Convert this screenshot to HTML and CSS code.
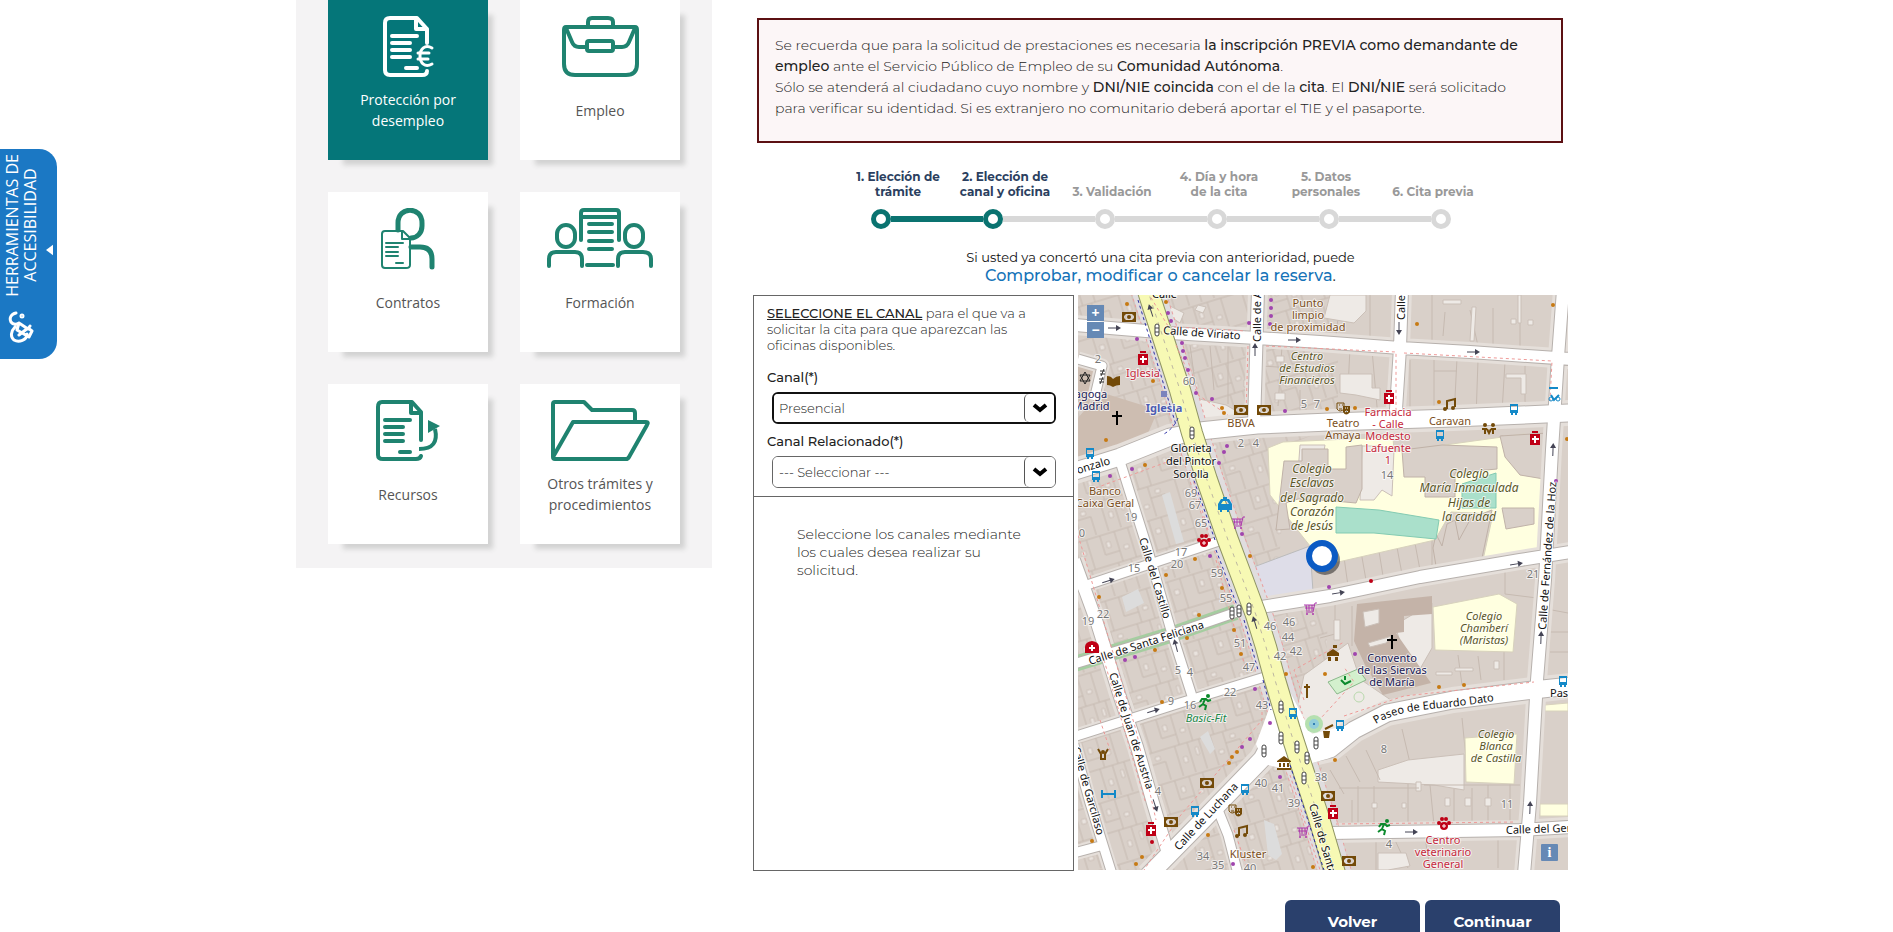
FILE: index.html
```html
<!DOCTYPE html>
<html lang="es">
<head>
<meta charset="utf-8">
<title>Cita previa</title>
<link rel="stylesheet" href="styles.css">
</head>
<body>
<button class="access" type="button">
  <span class="access-main">
    <span class="access-text">HERRAMIENTAS DE<br>ACCESIBILIDAD</span>
    <svg class="access-icon" viewBox="0 0 28 34" aria-hidden="true"><path d="M9 4C4 5 2 9 4 13q3 4 8 1l9 6M21 20l2-3M12 14l-2 7 12 7M8 18c-4 4-5 10-1 13 5 3 13 0 13-6M12 26l9-7 4 3-3 6"/><circle cx="15" cy="7" r="1"/></svg>
  </span>
  <svg class="access-arrow" viewBox="0 0 8 12" aria-hidden="true"><path d="M8 0v12L0 6z"/></svg>
</button>

<div class="page">
  <nav class="topics" aria-label="Trámites">
    <a class="topic topic-active" href="#">
      <svg class="topic-icon" viewBox="0 0 160 62" stroke-width="4"><path d="M99 27V13L89 2H62q-5 0-5 5v47q0 5 5 5h32q5 0 5-4M88 2v11h11M64 20h25M64 27h18M64 34h18M64 41h18M78 52h11"/><path stroke-width="3" d="M104 32c-7-4-12 1-12 8s5 12 12 8M90 37h11M90 43h10"/></svg>
      <span class="topic-label">Protección por desempleo</span>
    </a>
    <a class="topic" href="#">
      <svg class="topic-icon" viewBox="0 0 160 62" stroke-width="4"><path d="M46 11h69q2 0 2 3v34q0 11-11 11H55q-11 0-11-11V14q0-3 2-3zM46 12l6 14q2 5 7 5h8M94 31h8q5 0 7-5l6-14M68 10V6q0-4 4-4h16q5 0 5 4v4"/><rect x="67" y="25" width="26" height="10" rx="2"/></svg>
      <span class="topic-label">Empleo</span>
    </a>
    <a class="topic" href="#">
      <svg class="topic-icon" viewBox="0 0 160 62" stroke-width="5"><path d="M70 22v-7C70-2 94-2 94 15v3c0 7-5 12-11 12M83 39h9q12 0 12 12v8"/><path stroke-width="2" d="M75 23H57q-3 0-3 3v31q0 3 3 3h21q4 0 4-3V30zM74 23v8h8M58 35h17M58 39h12M58 44h12M58 48h12M68 55h7"/></svg>
      <span class="topic-label">Contratos</span>
    </a>
    <a class="topic" href="#">
      <svg class="topic-icon" viewBox="0 0 160 62" stroke-width="4"><rect x="37" y="17" width="18" height="22" rx="9"/><rect x="105" y="17" width="18" height="22" rx="9"/><path d="M29 58v-7q0-7 7-7h19q7 0 7 7v7M98 58v-7q0-7 7-7h18q8 0 8 7v7M61 32V5q0-3 3-3h32q3 0 3 3v27M61 9h38M69 16h23M69 24h23M69 33h23M69 41h23M67 57h26"/></svg>
      <span class="topic-label">Formación</span>
    </a>
    <a class="topic" href="#">
      <svg class="topic-icon" viewBox="0 0 160 62" stroke-width="4"><path d="M93 40V12L84 2H54q-4 0-4 5v48q0 4 5 4h33q4 0 5-3M83 2v11h10M57 20h25M57 27h18M57 34h18M57 41h18M72 52h10"/><path stroke-linecap="butt" d="M91 49c14 0 19-7 16-20"/><path class="solid" stroke="none" d="M100 20l12 6-12 7z"/></svg>
      <span class="topic-label">Recursos</span>
    </a>
    <a class="topic" href="#">
      <svg class="topic-icon" viewBox="0 0 160 62" stroke-width="4"><path d="M33 57V4q0-2 2-2h29l8 8h40q3 0 3 3v8M33 57l20-35h73q3 0 1 3l-18 32q-1 2-3 2H35q-2 0-2-2z"/></svg>
      <span class="topic-label">Otros trámites y procedimientos</span>
    </a>
  </nav>

  <main class="main">
    <p class="notice">Se recuerda que para la solicitud de prestaciones es necesaria <b>la inscripción PREVIA como demandante de<br>empleo</b> ante el Servicio Público de Empleo de su <b>Comunidad Autónoma</b>.<br>Sólo se atenderá al ciudadano cuyo nombre y <b>DNI/NIE coincida</b> con el de la <b>cita</b>. El <b>DNI/NIE</b> será solicitado<br>para verificar su identidad. Si es extranjero no comunitario deberá aportar el TIE y el pasaporte.</p>

    <section class="steps" aria-label="Pasos">
      <ol class="step-names">
        <li class="done">1. Elección de<br>trámite</li>
        <li class="done">2. Elección de<br>canal y oficina</li>
        <li>3. Validación</li>
        <li>4. Día y hora<br>de la cita</li>
        <li>5. Datos<br>personales</li>
        <li>6. Cita previa</li>
      </ol>
      <div class="track" aria-hidden="true">
        <i class="dot dot-done"></i><i class="bar bar-done"></i><i class="dot dot-done"></i><i class="bar"></i><i class="dot"></i><i class="bar"></i><i class="dot"></i><i class="bar"></i><i class="dot"></i><i class="bar"></i><i class="dot"></i>
      </div>
    </section>

    <p class="existing">Si usted ya concertó una cita previa con anterioridad, puede</p>
    <p class="existing-link"><a href="#">Comprobar, modificar o cancelar la reserva</a>.</p>

    <div class="finder">
      <section class="panel">
        <form class="filters">
          <p class="hint"><b>SELECCIONE EL CANAL</b> para el que va a solicitar la cita para que aparezcan las oficinas disponibles.</p>
          <label for="canal">Canal(*)</label>
          <div class="picker picker-focus">
            <select id="canal"><option>Presencial</option></select>
            <span class="picker-arrow"><svg viewBox="0 0 16 10" aria-hidden="true"><path d="M2 2l6 5 6-5"/></svg></span>
          </div>
          <label for="relacionado">Canal Relacionado(*)</label>
          <div class="picker">
            <select id="relacionado"><option>--- Seleccionar ---</option></select>
            <span class="picker-arrow"><svg viewBox="0 0 16 10" aria-hidden="true"><path d="M2 2l6 5 6-5"/></svg></span>
          </div>
        </form>
        <p class="empty">Seleccione los canales mediante los cuales desea realizar su solicitud.</p>
      </section>

      <div class="map">
        <svg class="map-canvas" viewBox="1078 295 490 575" preserveAspectRatio="xMidYMid slice" role="img" aria-label="Mapa de oficinas">
          <defs>
            <pattern id="parcels" width="78" height="64" patternUnits="userSpaceOnUse" patternTransform="rotate(-17)">
              <path class="lot" d="M0 2h78M0 33h78M10 2v31M23 2v31M37 2v20M52 2v31M66 2v31M6 33v31M19 33v31M34 45v19M47 33v31M60 33v31M72 33v31M37 22h15M19 45h15"/>
              <path class="court" d="M14 12h5v5h-5zM41 10h4v6h-4zM57 18h5v4h-5zM25 38h5v4h-5zM52 46h4v6h-4zM66 40h3v8h-3zM10 50h5v4h-5z"/>
            </pattern>
            <g id="narrow"><path d="M1118 455L1147 547L1170 627L1192 696M1078 588L1153 563L1222 540M1074 664L1170 635L1240 611M1070 738L1180 703L1268 676M1074 745L1090 803L1112 874M1216 805L1228 835L1238 874M1074 853L1100 846M1078 359L1102 366L1094 400"/></g>
            <g id="medium"><path d="M1076 325L1110 328L1170 333L1257 338L1320 342L1400 348L1470 352L1570 359M1258 290L1254 425M1402 290L1400 348L1395 424M1563 290L1558 357L1552 450L1545 580L1537 680L1530 803L1524 874M1255 608L1330 596L1420 577L1520 560L1570 552M1074 560L1097 623L1120 697L1137 747L1153 803L1170 860M1330 833L1390 832L1520 830L1570 827"/></g>
            <g id="wide"><path d="M1072 472L1120 457L1170 437L1200 431L1257 425L1330 422L1453 418L1570 413M1148 876L1203 820L1262 759L1284 718M1296 757L1330 749L1354 730L1387 713L1453 700L1533 690L1570 686"/></g>
            <path id="avenue" d="M1147 288L1180 390L1192 433L1207 480L1228 540L1243 580L1256 615L1266 647L1275 680L1290 730L1303 770L1318 815L1337 880"/>
            <path id="datoText" d="M1376 724Q1395 712 1430 709T1500 700"/>
            <g id="pharmacy"><path fill="#bf0016" d="M-3-7h6v2h-6zM-5-4H5V7H-5z"/><path stroke="#fff" stroke-width="2" d="M0-2v7M-3 1h7"/></g>
            <g id="bus"><path fill="#1489c8" fill-rule="evenodd" d="M-4-5h8v9H3v2H1V4h-2v2h-2V4h-1zM-3-3v4h6v-4z"/></g>
            <g id="bank"><path fill="#734a08" fill-rule="evenodd" d="M-7-5H7V5H-7zM-5-3v6H5v-6z"/><circle r="2" fill="#734a08"/><path fill="#734a08" d="M-5-3h2l-2 2zM5-3H3l2 2zM-5 3h2l-2-2zM5 3H3l2-2z"/></g>
            <g id="lights"><rect x="-2" y="-6" width="4" height="12" rx="2" fill="#fff" stroke="#444"/><path stroke="#444" d="M-2-2h4M-2 2h4"/></g>
            <g id="cart"><path fill="none" stroke="#ac39ac" d="M7-6H5L3 3h-7M-6-4H4M-5-1h9M-4-4l1 6M-1-4v6M2-4v6"/><circle cx="-3" cy="5" r="1" fill="#ac39ac"/><circle cx="3" cy="5" r="1" fill="#ac39ac"/></g>
            <g id="paw" fill="#bf0016"><circle cx="0" cy="2" r="4"/><circle cx="-5" cy="-1" r="2"/><circle cx="5" cy="-1" r="2"/><circle cx="-2" cy="-5" r="2"/><circle cx="2" cy="-5" r="2"/><path stroke="#fff" d="M0 0v4M-2 2h4"/></g>
            <g id="runner"><path fill="none" stroke="#0b8a2c" stroke-width="2" d="M0-3l-2 5 3 2-1 4M-2 2l-4 3M-5 0l2-3h4l2 2 3-1"/><circle cx="3" cy="-6" r="2" fill="#0b8a2c"/></g>
            <g id="note"><path fill="none" stroke="#734a08" stroke-width="2" d="M-3 4v-8l8-2v8"/><circle cx="-5" cy="4" r="2" fill="#734a08"/><circle cx="3" cy="3" r="2" fill="#734a08"/></g>
            <g id="masks"><path fill="none" stroke="#734a08" d="M-6-5h7v6q-4 4-7 0zM-4-3h1M-1-3h1M-4 1h3"/><path fill="#734a08" d="M0-2h7v6q-4 5-7 0z"/><path stroke="#fff" d="M2 0h1M4 0h1M2 4q2-2 3 0"/></g>
            <g id="arrow"><path stroke="#445" fill="none" d="M-6 0H4"/><path fill="#445" d="M2-3l5 3-5 3z"/></g>
          </defs>

          <rect x="1078" y="295" width="490" height="575" fill="#d9d0c9"/>
          <path fill="url(#parcels)" d="M1078 295h260v130l-50 20-10 130 50 40-10 255h-240z"/>
          <path class="lot" d="M1166 342l82 5M1190 345l8 60M1210 346l4 44M1228 346v58M1262 366l60 4M1282 346l-4 60M1300 390v30M1350 348l-2 40M1372 350l6 68M1370 295v42M1340 295l-4 44M1432 295v46M1445 312l-2 24M1470 310l8 36M1493 308v38M1520 295v54M1410 360v48M1434 358v60M1457 358l-3 60M1478 360l-2 58M1505 362l-3 50M1525 364v50M1434 371h23M1502 435l5 40 44 6M1528 434l4 45M1343 550l5 36M1360 546l6 34M1378 545l5 31M1396 542l6 32M1414 538l6 32M1432 530l0 38M1505 568v26l32 4M1335 604v30l-15 4M1352 606v40M1504 650v30M1458 655l4 30M1478 656l3 24M1402 729l8 34M1462 718l4 40M1430 785l4 40M1454 786v36M1472 788v34M1488 785v40M1510 784v40M1358 786v40M1374 786v40M1408 784v40M1376 840v30M1394 838l14 30M1425 838l5 30M1498 838v30M1552 610l16 3M1550 632h18M1550 652h18"/>
          <path class="ground" d="M1330 295h36v16l-12 12-30-5zM1340 374h32v14h8v12l-24-5-16-2zM1443 300h18v4h-18zM1472 307h4l-2 34h-4zM1518 295h3v28h-3zM1511 319h5v5h-5zM1528 320h5v5h-5zM1506 374h20v20h-5v-16h-15zM1168 305l16 8-4 10-12-8zM1198 305l8 2-3 6-8-3zM1276 356h8v6h-8zM1244 380h5v7h-5zM1275 393h10v7h-10zM1186 396l40 9 26 15-50 6z"/>
          <path class="school" d="M1268 448l15-6 110-5 1 15 130-18 29 7-10 110-60 9 10-46-42-2-16 28-110 25-55-70z"/>
          <path class="ground" d="M1362 446h18l14 4-2 46-10-6-8 10h-14zM1300 445h25l-2 12h-10v30h-16zM1304 675l44-32 12 36 44 30-40 12-46 20-24-18zM1395 625l37-22v45l-20 35zM1378 770l30-10 56-6v36l-30-5-56-3zM1378 853h28l4 13-22 4h-10z"/>
          <path class="school" d="M1433 607l66-13 18 10-4 48-78-2zM1465 738l52-4-3 50-48-2zM1545 705l23-2v8h-23zM1540 804h28v12h-28z"/>
          <path class="house" d="M1284 461h18v-12h26v20h18v-22l16-2v44l-6 14-22-2-36-2-12 4 4 26-14 1zM1402 450l40-5 55 2v22l-42 4v24h-30v-20h-21zM1500 436l48-3-4 46-24-4-15-18zM1502 508h32v16l-28 5zM1433 548l3-14 6 12 5-22 8-4 4 20 12-22 21-8-10 48-46 8z"/>
          <path class="ground" d="M1416 782h5v9h-5zM1445 798h5v8h-5zM1465 798h6v8h-6zM1485 798h6v8h-6zM1372 803h5v5h-5zM1402 803h4v5h-4zM1334 620h6v20h-6zM1436 672h16v3h-16zM1455 668h18v3h-18zM1494 661h5v8h-5z"/>
          <path class="grass" d="M1336 507l43 3 60 10-3 19-62-6h-38zM1462 484l34-11v35h-34z"/>
          <path class="lot" d="M1339 788h80M1424 785h96M1352 800v30M1366 750l14 30M1346 756l14 26M1330 770l14 24"/>
          <path fill="#dedde8" stroke="#bbb" d="M1251 568l59-22 3 46-50 11z"/>
          <path fill="#c4b3a8" d="M1357 604l75-8v18l-28 2v16l-8 1 35 50-48 12-18-30-11-24z"/>
          <path class="ground" d="M1363 612l16-3v14l-14 4zM1368 643l24-7-6 7-16 4z"/>
          <path fill="#cdbdb1" d="M1078 360l20 10-10 38-10-6zM1100 392l58 18-12 28-68 28v-48z"/>
          <path fill="#d3f0cd" stroke="#8bb98b" d="M1328 682l30-13 8 11-29 14z"/>
          <path fill="#dcdcdc" d="M1122 597l16-8 6 14-18 9zM1162 495l8-3 14 50-8 2zM1200 737l8-6 7 18-5 5zM1264 820l10 4 8 30-6 6-8-5z"/>

          <g fill="none" stroke-linejoin="round">
            <g stroke="#e5dfda"><use href="#narrow" stroke-width="15"/><use href="#medium" stroke-width="20"/><use href="#wide" stroke-width="26"/></g>
            <use href="#avenue" stroke="#e9a0a0" stroke-dasharray="3 3" stroke-width="34"/>
            <use href="#avenue" stroke="#e0dddf" stroke-width="32"/>
            <path stroke="#a5cda0" stroke-width="16" d="M1074 664L1170 635L1236 612"/>
            <g stroke="#b7b1ad"><use href="#narrow" stroke-width="11"/><use href="#medium" stroke-width="14"/><use href="#wide" stroke-width="19"/></g>
            <g stroke="#fff"><use href="#narrow" stroke-width="9"/><use href="#medium" stroke-width="12"/><use href="#wide" stroke-width="17"/></g>
            <path fill="#fff" stroke="none" d="M1276 690l14 2 22 42 40-10-22 34-42 12-24-6-8-20z"/>
            <use href="#avenue" stroke="#8e9463" stroke-width="22"/>
            <use href="#avenue" stroke="#f7f9b4" stroke-width="20"/>
            <use href="#avenue" stroke="#bdb7a0" stroke-dasharray="4 5"/>
            <path stroke="#2b2fa5" stroke-dasharray="3 3" d="M1138 300l38 125M1192 475l23 65M1216 550l22 58M1244 620l14 50M1263 680l8 30M1290 765l34 105M1178 418q-4 10-14 16"/>
            <path class="footway" d="M1174 327l72 4M1266 346l130 6v60M1248 346l-2 70M1404 353l148 8-2 40M1168 326l-18-30M1176 345l22 50 30 20M1090 490l88-32M1078 535l58 195 20 90M1104 660l42 144M1190 470l18 60M1216 560l30 110M1262 700v20l-82 96-36 54M1304 700l-10-30 50-28M1310 730l44-48-10-15M1344 716l60-20 130-14M1336 824l180-2M1290 775l30 95M1234 830l14 40M1100 720l10 30"/>
          </g>

          <g fill="#a045ae"><circle cx="1168" cy="313" r="2"/><circle cx="1171" cy="321" r="2"/><circle cx="1137" cy="339" r="2"/><circle cx="1182" cy="343" r="2"/><circle cx="1183" cy="351" r="2"/><circle cx="1185" cy="358" r="2"/><circle cx="1188" cy="370" r="2"/><circle cx="1196" cy="393" r="2"/><circle cx="1212" cy="399" r="2"/><circle cx="1249" cy="323" r="2"/><circle cx="1271" cy="300" r="2"/><circle cx="1271" cy="308" r="2"/><circle cx="1271" cy="316" r="2"/><circle cx="1270" cy="324" r="2"/><circle cx="1285" cy="411" r="2"/><circle cx="1227" cy="446" r="2"/><circle cx="1224" cy="452" r="2"/><circle cx="1219" cy="463" r="2"/><circle cx="1132" cy="469" r="2"/><circle cx="1110" cy="476" r="2"/><circle cx="1210" cy="556" r="2"/><circle cx="1242" cy="534" r="2"/><circle cx="1329" cy="587" r="2"/><circle cx="1125" cy="660" r="2"/><circle cx="1135" cy="657" r="2"/><circle cx="1255" cy="689" r="2"/><circle cx="1270" cy="723" r="2"/><circle cx="1250" cy="739" r="2"/><circle cx="1242" cy="747" r="2"/><circle cx="1280" cy="777" r="2"/><circle cx="1233" cy="864" r="2"/><circle cx="1355" cy="654" r="2"/><circle cx="1556" cy="481" r="2"/></g>
          <g fill="#c77a13"><circle cx="1127" cy="304" r="2"/><circle cx="1166" cy="302" r="2"/><circle cx="1153" cy="381" r="2"/><circle cx="1222" cy="408" r="2"/><circle cx="1224" cy="413" r="2"/><circle cx="1106" cy="440" r="2"/><circle cx="1145" cy="465" r="2"/><circle cx="1417" cy="324" r="2"/><circle cx="1553" cy="305" r="2"/><circle cx="1439" cy="402" r="2"/><circle cx="1355" cy="408" r="2"/><circle cx="1327" cy="409" r="2"/><circle cx="1567" cy="439" r="2"/><circle cx="1195" cy="559" r="2"/><circle cx="1166" cy="575" r="2"/><circle cx="1250" cy="556" r="2"/><circle cx="1222" cy="588" r="2"/><circle cx="1199" cy="615" r="2"/><circle cx="1099" cy="597" r="2"/><circle cx="1155" cy="650" r="2"/><circle cx="1187" cy="638" r="2"/><circle cx="1234" cy="630" r="2"/><circle cx="1241" cy="654" r="2"/><circle cx="1162" cy="702" r="2"/><circle cx="1229" cy="763" r="2"/><circle cx="1232" cy="757" r="2"/><circle cx="1237" cy="752" r="2"/><circle cx="1092" cy="841" r="2"/><circle cx="1136" cy="864" r="2"/><circle cx="1142" cy="857" r="2"/><circle cx="1208" cy="835" r="2"/><circle cx="1286" cy="674" r="2"/><circle cx="1325" cy="674" r="2"/><circle cx="1439" cy="687" r="2"/><circle cx="1464" cy="685" r="2"/><circle cx="1335" cy="760" r="2"/><circle cx="1313" cy="867" r="2"/></g>
          <g fill="#bf0016"><circle cx="1371" cy="581" r="2"/><circle cx="1152" cy="842" r="2"/></g>

          <use href="#bank" x="1129" y="317"/><use href="#bank" x="1241" y="410"/><use href="#bank" x="1264" y="410"/><use href="#bank" x="1207" y="783"/><use href="#bank" x="1171" y="822"/><use href="#bank" x="1328" y="796"/><use href="#bank" x="1349" y="861"/>
          <use href="#pharmacy" x="1143" y="358"/><use href="#pharmacy" x="1389" y="397"/><use href="#pharmacy" x="1535" y="438"/><use href="#pharmacy" x="1151" y="829"/><use href="#pharmacy" x="1333" y="812"/>
          <path fill="#bf0016" d="M1085 653v-6q0-5 7-6 7 1 7 6v6z"/><path stroke="#fff" stroke-width="2" d="M1092 645v6M1089 648h6"/>
          <use href="#bus" x="1090" y="453"/><use href="#bus" x="1096" y="476"/><use href="#bus" x="1514" y="409"/><use href="#bus" x="1440" y="435"/><use href="#bus" x="1293" y="713"/><use href="#bus" x="1340" y="725"/><use href="#bus" x="1245" y="789"/><use href="#bus" x="1195" y="811"/><use href="#bus" x="1563" y="681"/>
          <use href="#lights" x="1157" y="330"/><use href="#lights" x="1192" y="433"/><use href="#lights" x="1232" y="613"/><use href="#lights" x="1239" y="611"/><use href="#lights" x="1249" y="609"/><use href="#lights" x="1281" y="707"/><use href="#lights" x="1281" y="738"/><use href="#lights" x="1264" y="751"/><use href="#lights" x="1297" y="747"/><use href="#lights" x="1307" y="758"/><use href="#lights" x="1316" y="743"/><use href="#lights" x="1304" y="778"/>
          <use href="#cart" x="1238" y="523"/><use href="#cart" x="1310" y="609"/><use href="#cart" x="1303" y="832"/>
          <use href="#paw" x="1204" y="541"/><use href="#paw" x="1444" y="824"/>
          <use href="#runner" x="1205" y="702"/><use href="#runner" x="1384" y="827"/>
          <use href="#note" x="1450" y="405"/><use href="#note" x="1242" y="832"/>
          <use href="#masks" x="1343" y="408"/><use href="#masks" x="1235" y="810"/>
          <path fill="#1489c8" fill-rule="evenodd" d="M1218 510v-6l3-5h2v-2h4v2h2l3 5v6h-3v2h-2v-2h-5v2h-2v-2zM1221 504h8l-2-3h-4z"/>
          <path fill="none" stroke="#222" d="M1085 372l5 9h-10zM1085 384l5-9h-10z"/>
          <path stroke="#000" stroke-width="2" d="M1117 411v14M1112 416h10M1392 635v14M1387 640h10"/>
          <path fill="#734a08" d="M1107 376q4 0 6 3 3-3 7-3v9q-4 0-7 2-3-2-6-2z"/>
          <path stroke="#333" d="M1100 371h5M1100 374h5M1104 369l-3 7M1099 379h5M1099 382h5M1103 377l-3 7"/>
          <rect x="1161" y="391" width="6" height="6" fill="#7b83bd"/>
          <path fill="#734a08" d="M1277 761l7-5 7 5v1h-14zM1279 763h2v4h-2zM1283 763h2v4h-2zM1287 763h2v4h-2zM1277 768h14v2h-14zM1327 653l6-4 6 4v3h-12zM1328 657h3v4h4v-4h3v4h-10zM1333 645h4v3h-4zM1323 731h7l-1 7h-5z"/>
          <path fill="none" stroke="#734a08" stroke-width="2" d="M1098 749l3 5v5h4v-5l3-5M1325 729l8-4M1307 684v14M1304 687h6M1482 429h5M1491 429h5M1487 429l2 4 2-4M1485 429v5M1493 429v5"/>
          <circle cx="1103" cy="752" r="2" fill="#734a08"/><circle cx="1485" cy="425" r="2" fill="#734a08"/><circle cx="1493" cy="425" r="2" fill="#734a08"/>
          <path fill="none" stroke="#1489c8" stroke-width="2" d="M1549 388h9M1551 395l3 5 5-5M1102 790v8M1115 790v8M1102 794h13"/><circle cx="1551" cy="399" r="2" fill="none" stroke="#1489c8"/><circle cx="1558" cy="399" r="2" fill="none" stroke="#1489c8"/>
          <circle cx="1314" cy="724" r="9" fill="#b5e0b0"/><circle cx="1314" cy="724" r="5" fill="#93cedb"/><circle cx="1314" cy="724" r="1" fill="#16a"/>
          <path fill="none" stroke="#0b8a2c" stroke-width="2" d="M1341 680l4 4 6-3M1345 676v4"/><circle cx="1359" cy="697" r="5" fill="none" stroke="#b9d9ad"/>
          <use href="#arrow" x="1114" y="328"/><use href="#arrow" x="1294" y="340"/><use href="#arrow" x="1473" y="352"/>
          <g transform="translate(1151 311) rotate(-108)"><use href="#arrow"/></g><g transform="translate(1255 350) rotate(-90)"><use href="#arrow"/></g><g transform="translate(1399 328) rotate(90)"><use href="#arrow"/></g><g transform="translate(1553 450) rotate(-88)"><use href="#arrow"/></g><g transform="translate(1541 638) rotate(-88)"><use href="#arrow"/></g><g transform="translate(1530 808) rotate(-88)"><use href="#arrow"/></g>
          <g transform="translate(1108 581) rotate(-17)"><use href="#arrow"/></g><g transform="translate(1176 646) rotate(-105)"><use href="#arrow"/></g><g transform="translate(1255 623) rotate(-107)"><use href="#arrow"/></g><g transform="translate(1153 711) rotate(-17)"><use href="#arrow"/></g><g transform="translate(1155 805) rotate(72)"><use href="#arrow"/></g><g transform="translate(1338 593) rotate(-9)"><use href="#arrow"/></g><g transform="translate(1516 564) rotate(-9)"><use href="#arrow"/></g><use href="#arrow" x="1411" y="832"/>

          <g class="street">
            <text x="1152" y="298">Calle</text>
            <text transform="translate(1163 334) rotate(4)">Calle de Viriato</text>
            <text transform="translate(1261 342) rotate(-90)">Calle de A</text>
            <text transform="translate(1405 320) rotate(-90)">Calle</text>
            <text transform="translate(1078 474) rotate(-17)">onzalo</text>
            <text class="place" x="1191" y="452">Glorieta</text><text class="place" x="1191" y="465">del Pintor</text><text class="place" x="1191" y="478">Sorolla</text>
            <text transform="translate(1139 539) rotate(73)">Calle del Castillo</text>
            <text transform="translate(1090 665) rotate(-18)">Calle de Santa Feliciana</text>
            <text transform="translate(1109 674) rotate(72)">Calle de Juan de Austria</text>
            <text transform="translate(1072 748) rotate(74)">Calle de Garcilaso</text>
            <text transform="translate(1179 851) rotate(-47)">Calle de Luchana</text>
            <text transform="translate(1309 805) rotate(74)">Calle de Santa</text>
            <text transform="translate(1546 630) rotate(-86)">Calle de Fernández de la Hoz</text>
            <text><textPath href="#datoText">Paseo de Eduardo Dato</textPath></text>
            <text x="1550" y="697">Pas</text>
            <text transform="translate(1506 834) rotate(-2)">Calle del Ger</text>
          </g>
          <g class="poi brown">
            <text x="1308" y="307">Punto</text><text x="1308" y="319">limpio</text><text x="1308" y="331">de proximidad</text>
            <text x="1241" y="427">BBVA</text><text x="1343" y="427">Teatro</text><text x="1343" y="439">Amaya</text><text x="1450" y="425">Caravan</text>
            <text x="1105" y="495">Banco</text><text x="1105" y="507">Caixa Geral</text><text x="1248" y="858">Kluster</text>
          </g>
          <g class="poi red">
            <text x="1143" y="377">Iglesia</text>
            <text x="1388" y="416">Farmacia</text><text x="1388" y="428">- Calle</text><text x="1388" y="440">Modesto</text><text x="1388" y="452">Lafuente</text><text x="1388" y="464">1</text>
            <text x="1443" y="844">Centro</text><text x="1443" y="856">veterinario</text><text x="1443" y="868">General</text>
          </g>
          <g class="poi navy">
            <text x="1091" y="398">agoga</text><text x="1091" y="410">Madrid</text>
            <text x="1392" y="662">Convento</text><text x="1392" y="674">de las Siervas</text><text x="1392" y="686">de María</text>
          </g>
          <text class="poi metro" x="1164" y="412">Iglesia</text>
          <text class="poi sport" x="1206" y="722">Basic-Fit</text>
          <g class="poi college">
            <text x="1307" y="360">Centro</text><text x="1307" y="372">de Estudios</text><text x="1307" y="384">Financieros</text>
            <text x="1484" y="620">Colegio</text><text x="1484" y="632">Chamberí</text><text x="1484" y="644">(Maristas)</text>
            <text x="1496" y="738">Colegio</text><text x="1496" y="750">Blanca</text><text x="1496" y="762">de Castilla</text>
          </g>
          <g class="poi college large">
            <text x="1312" y="473">Colegio</text><text x="1312" y="487">Esclavas</text><text x="1312" y="502">del Sagrado</text><text x="1312" y="516">Corazón</text><text x="1312" y="530">de Jesús</text>
            <text x="1469" y="478">Colegio</text><text x="1469" y="492">María Inmaculada</text><text x="1469" y="507">Hijas de</text><text x="1469" y="521">la caridad</text>
          </g>
          <g class="number">
            <text x="1098" y="363">2</text><text x="1189" y="385">60</text><text x="1304" y="408">5</text><text x="1317" y="408">7</text><text x="1241" y="447">2</text><text x="1256" y="447">4</text><text x="1387" y="479">14</text>
            <text x="1131" y="521">19</text><text x="1082" y="537">0</text><text x="1191" y="497">69</text><text x="1195" y="509">67</text><text x="1201" y="527">65</text><text x="1181" y="556">17</text><text x="1177" y="568">20</text><text x="1134" y="572">15</text><text x="1217" y="577">59</text><text x="1226" y="602">55</text><text x="1103" y="618">22</text><text x="1088" y="625">19</text>
            <text x="1270" y="630">46</text><text x="1289" y="626">46</text><text x="1288" y="641">44</text><text x="1296" y="655">42</text><text x="1280" y="660">42</text><text x="1240" y="647">51</text><text x="1249" y="671">47</text><text x="1178" y="674">5</text><text x="1190" y="676">4</text><text x="1171" y="705">9</text><text x="1190" y="709">16</text><text x="1230" y="696">22</text><text x="1262" y="709">43</text>
            <text x="1261" y="787">40</text><text x="1278" y="792">41</text><text x="1294" y="807">39</text><text x="1321" y="781">38</text><text x="1203" y="860">34</text><text x="1218" y="869">35</text><text x="1158" y="795">4</text><text x="1250" y="872">40</text><text x="1533" y="578">21</text><text x="1384" y="753">8</text><text x="1507" y="808">11</text><text x="1389" y="848">4</text>
          </g>
          <circle cx="1325" cy="560" r="15" fill="#000" opacity=".45"/>
          <circle cx="1322" cy="556" r="13" fill="#fff" stroke="#0b5bc4" stroke-width="6"/>
        </svg>
        <div class="zoom"><button type="button" aria-label="Acercar">+</button><button type="button" aria-label="Alejar">−</button></div>
        <button class="info" type="button" aria-label="Información">i</button>
      </div>
    </div>

    <div class="actions"><button type="button">Volver</button><button type="button">Continuar</button></div>
  </main>
</div>
</body>
</html>
```
FILE: styles.css
```css
* { box-sizing: border-box; }
body { margin: 0; height: 100vh; overflow: hidden; background: #fff; color: #333; font-family: Montserrat, Inter, "Open Sans", sans-serif; }
p, ol { margin: 0; padding: 0; }
button { font: inherit; border: 0; padding: 0; cursor: pointer; }

.page { display: grid; grid-template-columns: 416px minmax(0, 1fr); gap: 41px; align-items: start; max-width: 1301px; margin: 0 auto; padding-right: 29px; }

.access { position: absolute; left: 0; top: 149px; z-index: 1; display: flex; align-items: center; gap: 7px; width: 57px; height: 210px; padding: 5px 4px 14px 2px; background: #1b78c4; color: #fff; border-radius: 0 18px 18px 0; }
.access-main { display: flex; flex-direction: column; align-items: center; gap: 12px; height: 100%; width: 37px; }
.access-text { writing-mode: vertical-rl; transform: rotate(180deg); font: 500 16px/18px "Open Sans", sans-serif; white-space: nowrap; }
.access-icon { width: 28px; height: 34px; fill: none; stroke: #fff; stroke-width: 3; stroke-linecap: round; stroke-linejoin: round; }
.access-arrow { width: 7px; height: 12px; fill: #fff; }

.topics { display: grid; grid-template-columns: repeat(2, 160px); gap: 32px; padding: 0 32px 24px; background: #f4f3f4; }
.topic { display: flex; flex-direction: column; gap: 11px; height: 160px; padding-top: 16px; background: #fff; color: #555; text-decoration: none; box-shadow: 10px 10px 5px -5px #d2d2d2; }
.topic-active { background: #057679; color: #fff; }
.topic-icon { width: 160px; height: 62px; fill: none; stroke: #1f8370; stroke-linecap: round; stroke-linejoin: round; }
.topic-active .topic-icon { stroke: #fff; }
.solid { fill: #1f8370; }
.topic-label { display: flex; align-items: center; justify-content: center; height: 42px; padding: 0 24px; font: 14px/21px "Open Sans", sans-serif; text-align: center; }

.notice { margin: 18px 5px 0 4px; padding: 15px 16px 22px; border: 2px solid #5c1013; background: #fcf6f7; color: #222; font-size: 14px; line-height: 21px; font-weight: 300; white-space: nowrap; }
.notice b { font-weight: 500; }

.steps { margin-top: 26px; }
.step-names { display: grid; grid-template-columns: repeat(6, 107px); justify-content: center; align-items: end; list-style: none; padding-left: 10px; color: #999; font-size: 12px; line-height: 15px; font-weight: 700; text-align: center; }
.step-names .done { color: #2b3f5f; }
.track { display: flex; align-items: center; justify-content: center; margin-top: 10px; }
.dot { flex: none; width: 20px; height: 20px; border: 5px solid #d8d8d8; border-radius: 50%; background: #fff; }
.bar { width: 92px; height: 6px; background: #d8d8d8; }
.dot-done { border-color: #0a7370; }
.bar-done { background: #0a7370; }

.existing { margin-top: 20px; color: #111; font-size: 13px; line-height: 16px; text-align: center; }
.existing-link { margin: 1px 0 9px; font-size: 16px; line-height: 20px; text-align: center; }
.existing-link a { color: #1573b8; font-weight: 500; text-decoration: none; }

.finder { display: grid; grid-template-columns: 321px minmax(0, 1fr); gap: 4px; height: 576px; }
.panel { border: 1px solid #666; }
.filters { height: 201px; padding: 9px 17px 0 13px; border-bottom: 1px solid #666; }
.hint { padding-right: 10px; color: #222; font-size: 13px; line-height: 16px; font-weight: 300; }
.hint b { font-weight: 500; text-decoration: underline; }
.filters label { display: block; margin-top: 16px; color: #222; font-size: 13px; line-height: 16px; font-weight: 500; }
.picker { display: grid; grid-template-columns: minmax(0, 1fr) 31px; grid-template-rows: minmax(0, 1fr); height: 32px; margin: 7px 0 0 5px; border: 1px solid #666; border-radius: 6px; overflow: hidden; }
.picker + label { margin-top: 9px; }
.picker-focus { grid-template-columns: minmax(0, 1fr) 30px; border: 2px solid #111; }
.picker select { grid-area: 1 / 1 / 2 / 3; appearance: none; border: 0; outline: 0; background: #fff; padding: 0 6px; color: #222; font: 300 13px Montserrat, Inter, sans-serif; }
.picker-focus select { padding: 0 5px; }
.picker-arrow { grid-area: 1 / 2; display: grid; place-items: center; border-left: 1px solid #555; border-radius: 5px 0 0 5px; pointer-events: none; }
.picker-arrow svg { width: 16px; height: 10px; fill: none; stroke: #000; stroke-width: 4; }
.empty { padding: 28px 40px 0 43px; color: #222; font-size: 14px; line-height: 18px; font-weight: 300; }

.map { position: relative; height: 575px; overflow: hidden; }
.map-canvas { display: block; width: 100%; height: 100%; }
.lot { fill: none; stroke: #c6bab1; }
.court { fill: #e9e3de; stroke: #cdc2ba; }
.ground { fill: #eeeae6; stroke: #cbc0b8; }
.house { fill: #d9d0c9; stroke: #c0b2a8; }
.school { fill: #ffffe0; stroke: #d8d2bd; }
.grass { fill: #aae0cb; stroke: #83cbb2; }
.footway { stroke: #ef9a98; stroke-dasharray: 3 3; }
.map text { font-family: "Noto Sans", sans-serif; font-size: 11px; paint-order: stroke; stroke: #fff; stroke-opacity: .7; stroke-width: 2px; stroke-linejoin: round; }
.street { fill: #111; }
.poi, .number, .place { text-anchor: middle; }
.brown { fill: #7b4f1c; }
.red { fill: #c5283c; }
.navy { fill: #202057; }
.college { fill: #5b5728; font-style: italic; }
.map .large text { font-size: 12px; }
.map .metro { fill: #4c5cb2; font-weight: 700; }
.sport { fill: #23884a; font-style: italic; }
.number { fill: #777; }
.zoom { position: absolute; left: 9px; top: 10px; display: grid; gap: 1px; }
.zoom button, .info { width: 17px; height: 16px; background: #6689b5; color: #fff; font: 700 14px/16px "Noto Sans", sans-serif; }
.info { position: absolute; right: 10px; bottom: 9px; height: 17px; font-family: "Liberation Serif", serif; border-radius: 1px; }

.actions { display: flex; justify-content: flex-end; gap: 5px; margin-top: 29px; padding-right: 8px; }
.actions button { width: 135px; height: 42px; border-radius: 6px; background: #2a406c; color: #fff; font-size: 15px; font-weight: 700; }
```
